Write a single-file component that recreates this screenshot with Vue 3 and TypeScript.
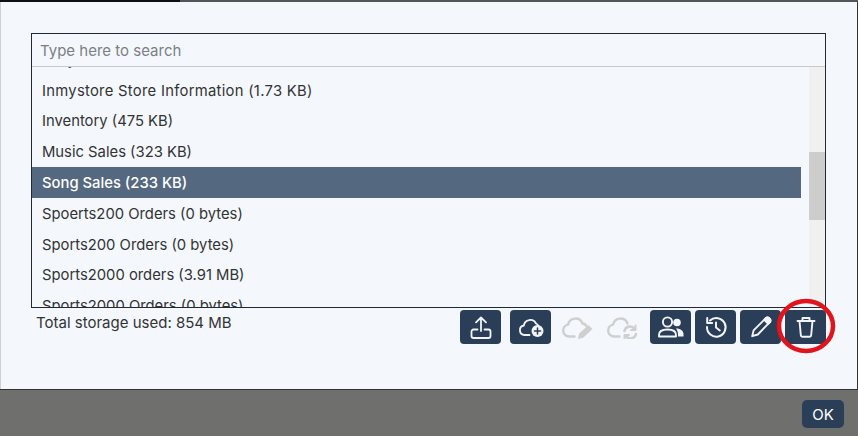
<script setup lang="ts">
const rows = [
  'Inmystore Store Details (12.1 KB)',
  'Inmystore Store Information (1.73 KB)',
  'Inventory (475 KB)',
  'Music Sales (323 KB)',
  'Song Sales (233 KB)',
  'Spoerts200 Orders (0 bytes)',
  'Sports200 Orders (0 bytes)',
  'Sports2000 orders (3.91 MB)',
  'Sports2000 Orders (0 bytes)',
]
const selected = 'Song Sales (233 KB)'
</script>

<template>
  <div class="screen">
    <div class="top-strip">
      <span class="strip-dark"></span>
      <span class="strip-grey"></span>
    </div>

    <main class="dialog">
      <section class="picker">
        <input class="search" type="text" placeholder="Type here to search" />
        <div class="list-wrap">
          <ul class="list">
            <li v-for="row in rows" :key="row" class="row" :class="{ active: row === selected }">{{ row }}</li>
          </ul>
          <div class="track"><div class="thumb"></div></div>
        </div>
      </section>

      <div class="toolbar">
        <span class="storage">Total storage used: 854 MB</span>
        <div class="actions">
          <button class="tool" title="Upload">
            <svg viewBox="0 0 24 24" width="24" height="24" fill="none" stroke="currentColor" stroke-width="1.8" stroke-linecap="round" stroke-linejoin="round">
              <path d="M12 16V2.500M7 7.300 12 2.500 17 7.300" />
              <path d="M8.500 14.500H4.500a2 2 0 0 0-2 2v4.500a2 2 0 0 0 2 2h15a2 2 0 0 0 2-2v-4.500a2 2 0 0 0-2-2h-4" />
            </svg>
          </button>
          <button class="tool" title="New">
            <svg viewBox="0 0 26 24" width="26" height="24" fill="none" stroke="currentColor" stroke-width="1.8" stroke-linecap="round" stroke-linejoin="round">
              <path d="M11.500 20H6.500a4.800 4.800 0 0 1-.7-9.500A6.500 6.500 0 0 1 18 8.500a4.500 4.500 0 0 1 2.500 2.500" />
              <circle cx="19.500" cy="16" r="6" fill="currentColor" stroke="none" />
              <path d="M19.500 13v6M16.500 16h6" stroke="#2a3f57" stroke-width="1.500" />
            </svg>
          </button>
          <button class="tool off" disabled title="Edit cloud">
            <svg viewBox="0 0 33 24" width="33" height="24" fill="none" stroke="currentColor" stroke-width="2.400" stroke-linecap="round" stroke-linejoin="round">
              <path d="M13.500 21.500H8a6 6 0 0 1-.9-11.900A7.500 7.500 0 0 1 21.500 8.500a5 5 0 0 1 4 2.800" />
              <path d="M17 24l1.200-5.500L27.500 10l4 4-9.300 8.700z" fill="currentColor" stroke="none" />
            </svg>
          </button>
          <button class="tool off" disabled title="Refresh cloud">
            <svg viewBox="0 0 33 24" width="33" height="24" fill="none" stroke="currentColor" stroke-width="2.400" stroke-linecap="round" stroke-linejoin="round">
              <path d="M13.500 21.500H8a6 6 0 0 1-.9-11.900A7.500 7.500 0 0 1 21.500 8.500" />
              <path d="M18.500 16a5.500 5.500 0 0 1 10-2M30 19a5.500 5.500 0 0 1-10 2" stroke-width="2.600" />
              <path d="M29.500 10.500v4.500h-4.500M18.500 24.500V20h4.500" stroke-width="2" />
            </svg>
          </button>
          <button class="tool" title="Share">
            <svg viewBox="0 0 28 24" width="28" height="24" fill="none" stroke="currentColor" stroke-width="1.900" stroke-linecap="round" stroke-linejoin="round">
              <circle cx="10.500" cy="7" r="4.600" />
              <path d="M2 21.500v-1.500c0-3.400 3-5.500 8.500-5.500s8.500 2.100 8.500 5.500v1.500z" />
              <circle cx="20" cy="7.500" r="3.800" fill="currentColor" stroke="none" />
              <path d="M19 13.500c5 0 7.500 2.500 7.500 5.500v2.500H21v-2c0-2.300-.8-4.500-2-6z" fill="currentColor" stroke="none" />
            </svg>
          </button>
          <button class="tool" title="History">
            <svg viewBox="0 0 24 24" width="24" height="24" fill="none" stroke="currentColor" stroke-width="2" stroke-linecap="round" stroke-linejoin="round">
              <path d="M6 5.500a9.300 9.300 0 1 1-3 6.500" />
              <path d="M3.200 3v5h5" />
              <path d="M12 7.500V12.500l3.800 3" />
            </svg>
          </button>
          <button class="tool" title="Rename">
            <svg viewBox="0 0 24 24" width="24" height="24" fill="none" stroke="currentColor" stroke-width="1.900" stroke-linecap="round" stroke-linejoin="round">
              <path d="M3.200 21.200l1.400-5.800L16.800 3.200a2.300 2.300 0 0 1 3.300 0l.7.700a2.300 2.300 0 0 1 0 3.300L8.800 19.500z" fill="none" />
              <path d="M16.800 3.200a2.300 2.300 0 0 1 3.300 0l.7.700a2.300 2.300 0 0 1 0 3.300l-1.600 1.600-4-4z" fill="currentColor" />
            </svg>
          </button>
          <button class="tool" title="Delete">
            <svg viewBox="0 0 24 24" width="24" height="24" fill="none" stroke="currentColor" stroke-width="1.900" stroke-linecap="round" stroke-linejoin="round">
              <path d="M3.500 6h17M8.500 6V3h7v3" />
              <path d="M5.500 6l1.300 14a2 2 0 0 0 2 1.800h6.400a2 2 0 0 0 2-1.800L18.500 6" />
            </svg>
          </button>
          <svg class="ring" viewBox="0 0 62 60" width="62" height="60" fill="none">
            <ellipse cx="31" cy="30" rx="27" ry="25" stroke="#e2131b" stroke-width="4.500" />
          </svg>
        </div>
      </div>
    </main>

    <footer class="footer">
      <button class="ok">OK</button>
    </footer>
  </div>
</template>

<style scoped>
.screen {
  position: relative;
  width: 858px;
  height: 436px;
  display: flex;
  flex-direction: column;
  overflow: hidden;
  font-family: Inter, "Liberation Sans", sans-serif;
  background: #6f706e;
}

.top-strip {
  display: flex;
  height: 2px;
  flex: none;
}

.strip-dark {
  width: 180px;
  background: #0d1117;
}

.strip-grey {
  flex: 1;
  background: #555;
}

.dialog {
  flex: none;
  height: 387px;
  box-sizing: border-box;
  padding: 31px 31px 0 30px;
  background: #f4f8fc;
  border-left: 1px solid #cfcfcf;
  border-right: 1px solid #333;
}

.picker {
  height: 275px;
  box-sizing: border-box;
  border: 1px solid #1f2a35;
  display: flex;
  flex-direction: column;
}

.search {
  flex: none;
  height: 33px;
  box-sizing: border-box;
  padding: 0 8px;
  border: none;
  border-bottom: 1px solid #c9c9c9;
  background: transparent;
  outline: none;
  font-family: inherit;
  font-size: 15px;
  color: #333;
}

.search::placeholder {
  color: #7b7f84;
  opacity: 1;
}

.list-wrap {
  flex: 1;
  min-height: 0;
  display: flex;
}

.list {
  flex: 1;
  margin: 0;
  padding: 0 8px 0 0;
  list-style: none;
  overflow: hidden;
}

.row {
  height: 30.8px;
  box-sizing: border-box;
  padding: 2px 0 0 10px;
  line-height: 28.8px;
  font-size: 14.8px;
  color: #333;
  white-space: nowrap;
}

.row:first-child {
  margin-top: -23.2px;
}

.row:nth-child(2) {
  letter-spacing: 0.28px;
}

.row.active {
  background: #54687f;
  color: #fff;
  font-weight: 500;
}

.track {
  flex: none;
  width: 16px;
  background: #f0f0f0;
}

.thumb {
  height: 68px;
  margin-top: 85px;
  background: #cdcdcd;
}

.toolbar {
  display: flex;
  justify-content: space-between;
  margin-top: 2px;
}

.storage {
  padding: 4px 0 0 5px;
  font-size: 15px;
  line-height: 17px;
  color: #333;
}

.actions {
  position: relative;
  display: flex;
  gap: 4px;
}

.tool {
  width: 41px;
  height: 34px;
  padding: 0;
  display: flex;
  align-items: center;
  justify-content: center;
  background: #2a3f57;
  color: #f2f5f8;
  border: none;
  border-radius: 4px;
  cursor: pointer;
}

.tool:nth-child(2) {
  margin-left: 5px;
}

.tool:nth-child(5) {
  margin-left: 5px;
}

.tool.off {
  background: transparent;
  color: #cfcfcf;
  cursor: default;
  padding-left: 3px;
}

.ring {
  position: absolute;
  right: -11px;
  top: -14px;
  pointer-events: none;
}

.footer {
  flex: 1;
  display: flex;
  justify-content: flex-end;
  align-items: flex-start;
  padding: 10px 14px 0 0;
  background: #6f706e;
  border-top: 1px solid #333;
}

.ok {
  width: 42px;
  height: 28px;
  padding: 0;
  background: #2a3f57;
  color: #fff;
  border: none;
  border-radius: 5px;
  font-family: inherit;
  font-size: 15px;
  font-weight: 400;
  cursor: pointer;
}
</style>
